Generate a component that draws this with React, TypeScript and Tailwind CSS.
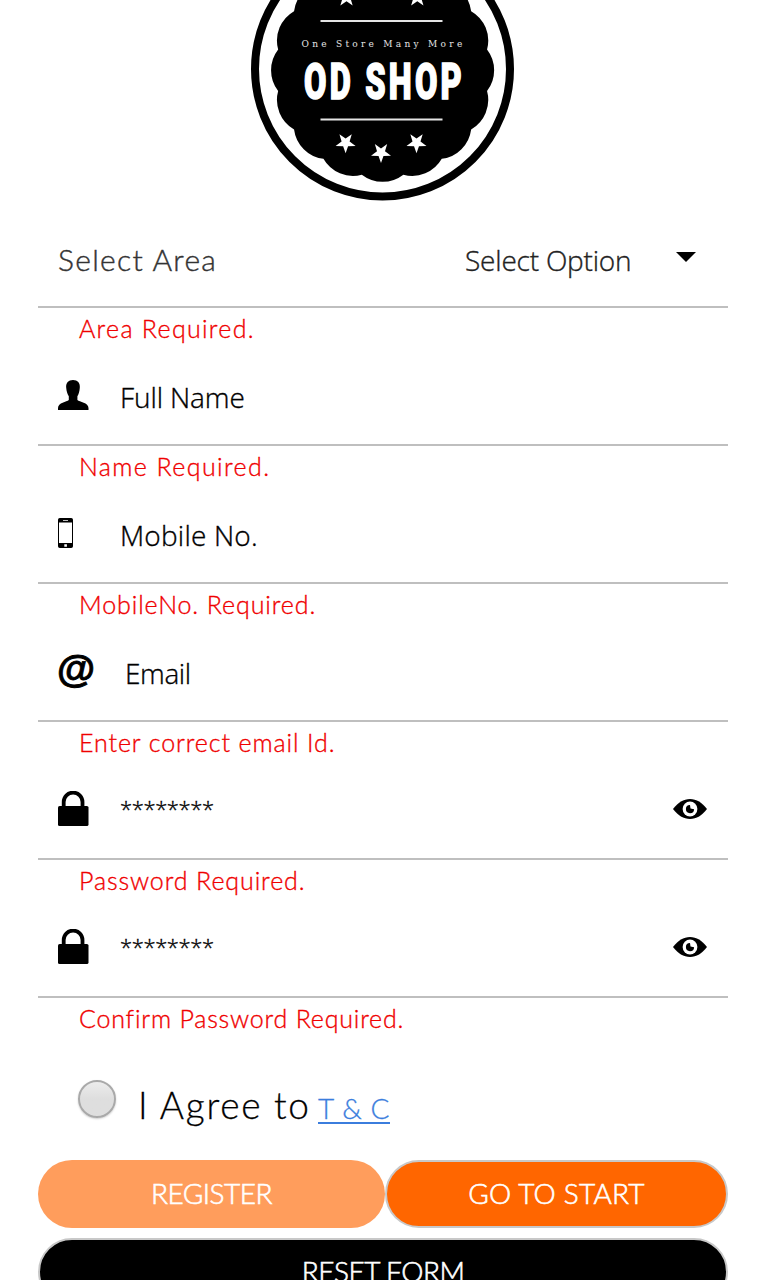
import type { ReactNode } from "react";

const SCALLOPS = 16;

// scalloped edge of the badge, one arc per lobe
const badgePath = (cx: number, cy: number, r: number, lobe: number) => {
    const step = (Math.PI * 2) / SCALLOPS;
    const point = (i: number) => {
        const a = step / 2 + i * step;
        return `${(cx + r * Math.cos(a)).toFixed(2)} ${(cy + r * Math.sin(a)).toFixed(2)}`;
    };
    let d = `M${point(0)}`;
    for (let i = 1; i <= SCALLOPS; i++) {
        d += `A${lobe} ${lobe} 0 0 1 ${point(i)}`;
    }
    return d + "Z";
};

const starPoints = (cx: number, cy: number, r: number, down = false) => {
    const points: string[] = [];
    for (let i = 0; i < 10; i++) {
        const a = (i * Math.PI) / 5 + (down ? Math.PI / 2 : -Math.PI / 2);
        const len = i % 2 === 0 ? r : r * 0.4;
        points.push(`${(cx + len * Math.cos(a)).toFixed(2)},${(cy + len * Math.sin(a)).toFixed(2)}`);
    }
    return points.join(" ");
};

const Logo = () => (
    <svg width="266" height="202" viewBox="250 0 266 202" className="ml-[250px] block">
        <circle cx="382.5" cy="69" r="127.5" fill="#fff" stroke="#000" strokeWidth="8" />
        <path d={badgePath(382.6, 70.3, 106.5, 34)} fill="#000" />
        <polygon points={starPoints(346.5, -3, 10.5)} fill="#fff" />
        <polygon points={starPoints(417.3, -3, 10.5)} fill="#fff" />
        <path d="M320.5 21H442.5M320.5 119.6H442.5" stroke="#e4e4e4" strokeWidth="2" />
        <text
            x="301.5"
            y="47"
            fill="#e4e4e4"
            fontSize="8.6"
            letterSpacing="3.1"
            textLength="164"
            className="font-['DejaVu_Serif',serif]"
            lengthAdjust="spacingAndGlyphs"
        >
            One Store Many More
        </text>
        <text
            x="304"
            y="99"
            fill="#fff"
            stroke="#fff"
            strokeWidth="1.6"
            fontSize="50.5"
            textLength="161"
            letterSpacing="5"
            className="font-['Roboto',sans-serif] font-black"
            lengthAdjust="spacingAndGlyphs"
        >
            OD SHOP
        </text>
        <polygon points={starPoints(345.6, 142.8, 10.5, true)} fill="#fff" />
        <polygon points={starPoints(381, 152.6, 10.5, true)} fill="#fff" />
        <polygon points={starPoints(416.5, 142.8, 10.5, true)} fill="#fff" />
    </svg>
);

const UserIcon = () => (
    <svg width="31" height="30" viewBox="0 0 31 30" className="block">
        <path d="M15 0C19.6 0 22.3 2.8 21.8 7.8C21.5 11.8 20.6 14.5 19.4 16.2V20C21.4 22 30.5 22.6 30.5 28V30H0V28C0 22.6 8.8 22 10.8 20V16.2C9.6 14.5 8.5 11.8 8.2 7.8C7.7 2.8 10.4 0 15 0Z" />
    </svg>
);

const MobileIcon = () => (
    <svg width="15" height="30" viewBox="0 0 15 30" className="block">
        <path
            fillRule="evenodd"
            d="M1.8 0H13.2A1.8 1.8 0 0 1 15 1.8V28.2A1.8 1.8 0 0 1 13.2 30H1.8A1.8 1.8 0 0 1 0 28.2V1.8A1.8 1.8 0 0 1 1.8 0ZM1 4.5V25H14V4.5ZM5 2V2.8H10V2ZM6.3 26.2V28.7H8.9V26.2Z"
        />
    </svg>
);

const AtIcon = () => (
    <span className="-ml-px block h-[36px] font-['Liberation_Sans',sans-serif] text-[39px] font-bold leading-[33px] [-webkit-text-stroke:0.9px_#000]">
        @
    </span>
);

const LockIcon = () => (
    <svg width="31" height="35" viewBox="0 0 31 35" className="block">
        <path d="M5.7 16V11A9.4 9.4 0 0 1 24.5 11V16" fill="none" stroke="#000" strokeWidth="3.8" />
        <rect y="15" width="30.5" height="20" rx="1.6" />
    </svg>
);

const EyeIcon = () => (
    <svg width="34" height="20" viewBox="0 0 34 20" className="block">
        <path d="M0 10C5 3.5 10.5 0 17 0S29 3.5 34 10C29 16.5 23.5 20 17 20S5 16.5 0 10Z" />
        <circle cx="17" cy="10" r="7.4" fill="#fff" />
        <path d="M17 6A4.1 4.1 0 1 0 21.1 10.2L17.5 9.6Z" />
    </svg>
);

interface FieldProps {
    icon: ReactNode;
    iconClass: string;
    label: string;
    labelClass: string;
    error: string;
    errorClass: string;
    secret?: boolean;
}

const Field = ({ icon, iconClass, label, labelClass, error, errorClass, secret }: FieldProps) => (
    <div className="h-[138px]">
        <div className="flex h-[90px] items-start border-b-2 border-[#bfbfbf] pl-5">
            <span className={iconClass}>{icon}</span>
            <span className={`whitespace-nowrap font-['Open_Sans',sans-serif] font-light leading-[40px] [-webkit-text-stroke:0.35px_#000] ${labelClass}`}>
                {label}
            </span>
            {secret && (
                <span className="ml-auto mr-[21px] mt-[29px]">
                    <EyeIcon />
                </span>
            )}
        </div>
        <ErrorText text={error} className={errorClass} />
    </div>
);

const ErrorText = ({ text, className }: { text: string; className: string }) => (
    <p className={`h-12 whitespace-nowrap pl-[41px] pt-[5px] font-['Lato',sans-serif] text-[25px] font-light leading-[30px] text-[#f00000] [-webkit-text-stroke:0.35px_#f00000] ${className}`}>
        {text}
    </p>
);

export default function App() {
    return (
        <div className="h-[1280px] w-[766px] overflow-hidden bg-white text-black">
            <Logo />
            <div className="mx-[38px]">
                <div className="flex h-[106px] items-start border-b-2 border-[#bfbfbf] pl-5 pt-[38px]">
                    <span className="w-[407px] whitespace-nowrap font-['Lato',sans-serif] text-[30px] font-light leading-[39px] tracking-[1.3px] text-[#333] [-webkit-text-stroke:0.4px_#333]">
                        Select Area
                    </span>
                    <span className="w-[211px] whitespace-nowrap font-['Open_Sans',sans-serif] text-[28px] font-light leading-[40px] tracking-[-0.2px] text-[#222] [-webkit-text-stroke:0.35px_#222]">
                        Select Option
                    </span>
                    <svg width="20" height="10" viewBox="0 0 20 10" className="mt-[12px]">
                        <path d="M0 0H20L10 10Z" />
                    </svg>
                </div>
                <ErrorText text="Area Required." className="tracking-[1.3px]" />

                <Field
                    icon={<UserIcon />}
                    iconClass="mt-[24px] w-[62px]"
                    label="Full Name"
                    labelClass="mt-[21px] text-[28px] tracking-[-0.1px]"
                    error="Name Required."
                    errorClass="tracking-[1.4px]"
                />
                <Field
                    icon={<MobileIcon />}
                    iconClass="mt-[24px] w-[62px]"
                    label="Mobile No."
                    labelClass="mt-[21px] text-[28px] tracking-[0.2px]"
                    error="MobileNo. Required."
                    errorClass="tracking-[0.9px]"
                />
                <Field
                    icon={<AtIcon />}
                    iconClass="mt-[20px] w-[67px]"
                    label="Email"
                    labelClass="mt-[21px] text-[28px] tracking-[-0.4px]"
                    error="Enter correct email Id."
                    errorClass="tracking-[0.9px]"
                />
                <Field
                    icon={<LockIcon />}
                    iconClass="mt-[21px] w-[62px]"
                    label="********"
                    labelClass="mt-[18px] text-[22px] tracking-[-0.4px]"
                    error="Password Required."
                    errorClass="tracking-[0.9px]"
                    secret
                />
                <Field
                    icon={<LockIcon />}
                    iconClass="mt-[21px] w-[62px]"
                    label="********"
                    labelClass="mt-[18px] text-[22px] tracking-[-0.4px]"
                    error="Confirm Password Required."
                    errorClass="tracking-[0.8px]"
                    secret
                />

                <div className="flex h-[114px] items-start pl-10 pt-[34px]">
                    <span className="h-[38px] w-[38px] rounded-full border-2 border-[#a9a9a9] bg-linear-to-b from-[#ececec] via-[#dedede] to-[#dedede] shadow-[0_1px_2px_rgba(0,0,0,0.2)]" />
                    <p className="ml-[22px] flex items-baseline whitespace-nowrap font-['Lato',sans-serif] font-light leading-[49px]">
                        <span className="w-[180px] text-[37px] tracking-[1.7px] [-webkit-text-stroke:0.3px_#000]">I Agree to</span>
                        <a className="border-b-2 border-[#3b7ddd] text-[28px] leading-[27px] tracking-[0.6px] text-[#3b7ddd] [-webkit-text-stroke:0.3px_#3b7ddd]">
                            T &amp; C
                        </a>
                    </p>
                </div>

                <div className="flex h-[68px] font-['Lato',sans-serif] text-[28px] font-light leading-[62px] text-white [-webkit-text-stroke:0.6px_#fff]">
                    <button className="w-[347px] rounded-full bg-[#ff9d5c] pb-0.5 tracking-[-0.5px]">REGISTER</button>
                    <button className="w-[343px] rounded-full border-2 border-[#c8c8c8] bg-[#ff6600] pb-0.5 tracking-[0.2px]">GO TO START</button>
                </div>
                <button className="mt-[10px] block h-[68px] w-full rounded-full border-2 border-[#c8c8c8] bg-black pb-0.5 font-['Lato',sans-serif] text-[28px] font-light leading-[62px] tracking-[-0.5px] text-white [-webkit-text-stroke:0.6px_#fff]">
                    RESET FORM
                </button>
            </div>
        </div>
    );
}
